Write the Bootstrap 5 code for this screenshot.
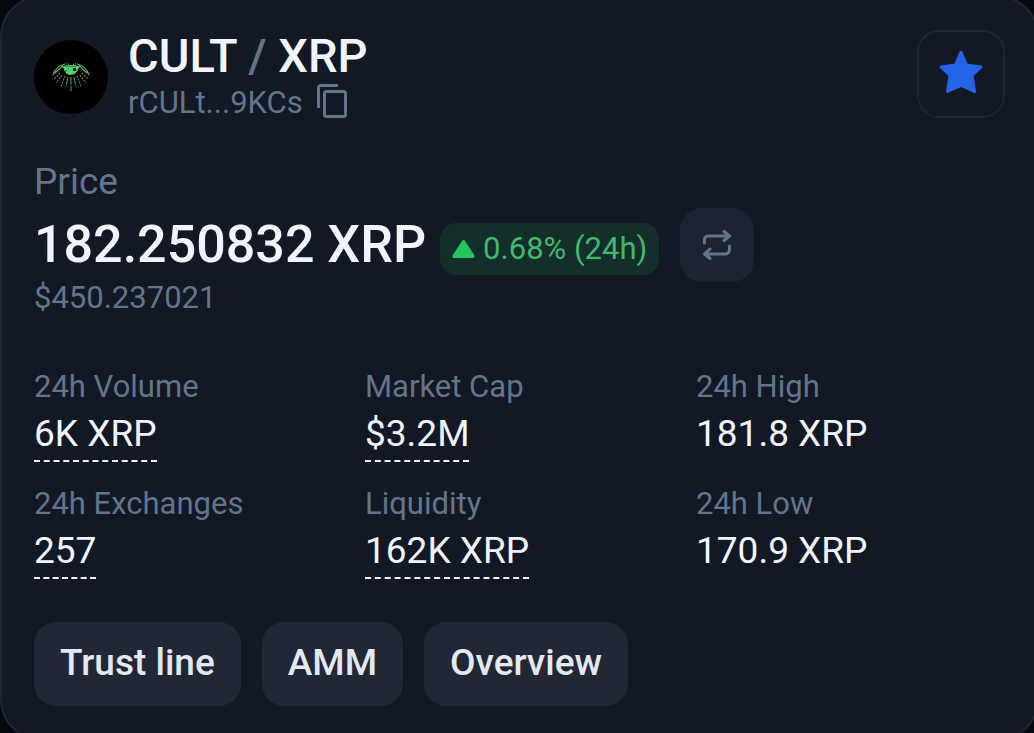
<!DOCTYPE html>
<html lang="en" data-bs-theme="dark">
<head>
<meta charset="utf-8">
<meta name="viewport" content="width=device-width, initial-scale=1">
<title>CULT / XRP</title>
<link href="https://cdn.jsdelivr.net/npm/bootstrap@5.3.0/dist/css/bootstrap.min.css" rel="stylesheet">
<style>
  body { background: #05080f; color: #f1f5ff; font-family: Roboto, sans-serif; overflow-x: hidden; }
  .token-card { background: #121824; border: 2px solid #1f2531; border-radius: 40px; margin: -4px -5px 0 0; padding: 32px; --bs-card-color: #f1f5ff; }
  .dim { color: #64748b; }
  .avatar { width: 74px; height: 74px; margin-top: 10px; margin-right: 20px; }
  .pair { font-size: 47px; line-height: 52px; font-weight: 500; color: #f1f5ff; }
  .minor { font-size: 31px; line-height: 42px; }
  .usd { font-size: 31px; line-height: 32px; }
  .copy { margin-left: 11px; }
  .price-label { font-size: 37px; line-height: 48px; margin-top: 34px; margin-bottom: 2px; }
  .price { font-size: 52px; line-height: 74px; font-weight: 500; }
  .change { background: #142e2b; color: #3fba6c; border-radius: 16px; font-size: 31px; line-height: 52px; padding: 0 12px; margin-left: 14px; margin-top: 7px; }
  .btn-star, .btn-swap { border-radius: 22px; padding: 0; }
  .btn-star { width: 88px; height: 88px; border: 2px solid #1f2531; }
  .btn-swap { width: 74px; height: 74px; background: #1c2433; margin-left: 21px; }
  .stats { --bs-gutter-x: 22px; --bs-gutter-y: 21px; margin-top: 31px; }
  .stat-value { font-size: 37px; line-height: 52px; min-height: 54px; }
  .tip { border-bottom: 2px dashed #f1f5ff; }
  .actions { gap: 21px; margin-top: 43px; }
  .btn-action { background: #212734; color: #e2e8f4; border: 0; border-radius: 22px; font-size: 37px; line-height: 44px; font-weight: 500; padding: 19px 26px 21px; }
</style>
</head>
<body>
<main class="card token-card">
  <header class="d-flex align-items-start">
    <svg class="avatar flex-shrink-0" viewBox="0 0 74 74" role="img" aria-label="CULT logo">
      <circle cx="37" cy="37" r="37" fill="#000"/>
      <g fill="none" stroke="#5fae74" stroke-width="1.2">
        <path d="M19 35C21 29 26 25 31 24M21 33L29 25.500M55 35C53 29 48 25 43 24M53 33L45 25.500" />
        <path d="M32 23.500L35 24.500M39 24.500L42 23.500" stroke-dasharray="1 1"/>
        <path d="M28 27C33 25.500 41 25.500 46 27" stroke="#4fd06f"/>
      </g>
      <path d="M29 26.500H45C44 32 40.500 35 36 35C32 34.500 30 31 29 26.500Z" fill="#58cf76"/>
      <rect x="39" y="28" width="3" height="3" fill="#03150a"/>
      <path d="M31 31h2M34 29h1" stroke="#1d6d38"/>
      <g stroke="#4d9260" stroke-width="1.100" fill="none">
        <path d="M37 37V51M34 37L32 47M40 37L42 47" stroke-dasharray="8 1"/>
        <path d="M31 36L27 46M43 36L47 46M28 35L22 43M46 35L52 43M26 33L20 39M48 33L54 39" stroke-dasharray="2 1"/>
      </g>
    </svg>
    <div class="me-auto">
      <h1 class="pair m-0">CULT <span class="dim">/</span> XRP</h1>
      <div class="minor dim d-flex align-items-center">rCULt...9KCs
        <button type="button" class="btn copy border-0 p-0 d-flex dim" aria-label="Copy issuer address">
          <svg width="40" height="40" viewBox="0 1 40 40" fill="none" stroke="currentColor" stroke-width="3">
            <path d="M4.500 26V6Q4.500 3.500 7 3.500H24"/><rect x="10.500" y="9.500" width="21" height="25" rx="2"/>
          </svg>
        </button>
      </div>
    </div>
    <button type="button" class="btn btn-star d-flex align-items-center justify-content-center" aria-label="Remove from favourites" aria-pressed="true">
      <svg width="46" height="46" viewBox="0 3 46 46" fill="#2563eb" stroke="#2563eb" stroke-width="3" stroke-linejoin="round"><path d="M23 4L28.500 17L43 19L34 27.500L36.500 43.500L23 37.500L9.500 43.500L12 27.500L3 19L17.500 17Z"/></svg>
    </button>
  </header>

  <section>
    <div class="price-label dim">Price</div>
    <div class="d-flex align-items-center flex-wrap">
      <span class="price">182.250832 XRP</span>
      <span class="change d-flex align-items-center gap-2">
        <svg width="23" height="18" viewBox="0 0 23 18" fill="#22c55e" aria-hidden="true"><path d="M11.500 0Q12.500 0 13 1L22.500 15.500Q23 18 21 18H2Q0 18 .5 15.500L10 1Q10.500 0 11.500 0Z"/></svg>
        0.68% (24h)
      </span>
      <button type="button" class="btn btn-swap d-flex align-items-center justify-content-center" aria-label="Swap currencies">
        <svg width="32" height="32" viewBox="0 0 32 32" fill="none" stroke="#64748b" stroke-width="3" stroke-linecap="round" stroke-linejoin="round"><path d="M3.500 14V11Q3.500 7 7.500 7H28M23 2.500L28.500 7L23 11.500M28.500 17V20Q28.500 25 24 25H4M9 20L3.500 25L9 29.500"/></svg>
      </button>
    </div>
    <div class="usd dim">$450.237021</div>
  </section>

  <section class="row stats">
    <div class="col-4"><div class="minor dim">24h Volume</div><div class="stat-value"><span class="tip d-inline-block">6K XRP</span></div></div>
    <div class="col-4"><div class="minor dim">Market Cap</div><div class="stat-value"><span class="tip d-inline-block">$3.2M</span></div></div>
    <div class="col-4"><div class="minor dim">24h High</div><div class="stat-value">181.8 XRP</div></div>
    <div class="col-4"><div class="minor dim">24h Exchanges</div><div class="stat-value"><span class="tip d-inline-block">257</span></div></div>
    <div class="col-4"><div class="minor dim">Liquidity</div><div class="stat-value"><span class="tip d-inline-block">162K XRP</span></div></div>
    <div class="col-4"><div class="minor dim">24h Low</div><div class="stat-value">170.9 XRP</div></div>
  </section>

  <div class="actions d-flex flex-wrap">
    <button type="button" class="btn btn-action">Trust line</button>
    <button type="button" class="btn btn-action">AMM</button>
    <button type="button" class="btn btn-action">Overview</button>
  </div>
</main>
<script src="https://cdn.jsdelivr.net/npm/bootstrap@5.3.0/dist/js/bootstrap.bundle.min.js"></script>
</body>
</html>
